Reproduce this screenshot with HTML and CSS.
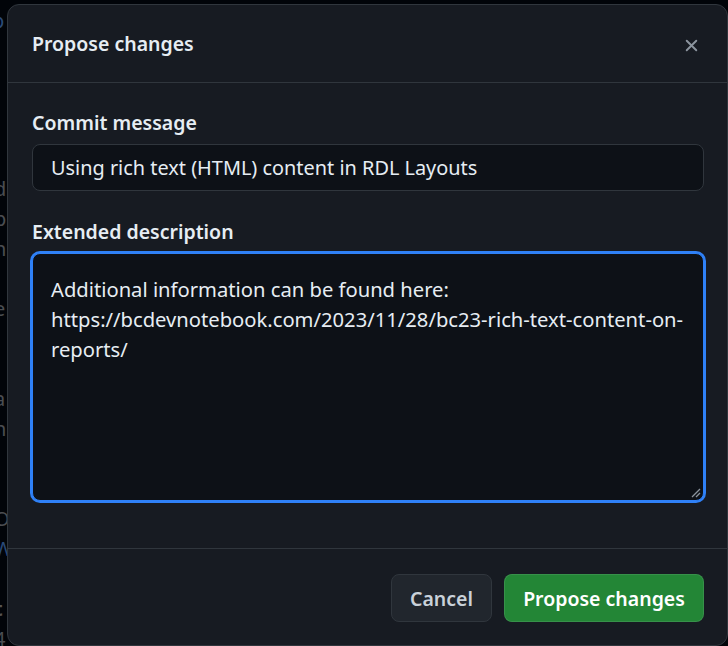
FILE: index.html
```html
<!DOCTYPE html>
<html lang="en">
<head>
<meta charset="utf-8">
<title>Propose changes</title>
<link rel="stylesheet" href="styles.css">
</head>
<body>
<div class="backdrop">
  <div class="bg-line blue top">p</div>
  <div class="bg-line l1">d</div>
  <div class="bg-line">p</div>
  <div class="bg-line">n</div>
  <div class="bg-line gap">e</div>
  <div class="bg-line gap2">a</div>
  <div class="bg-line">n</div>
  <div class="bg-line">i</div>
  <div class="bg-line gap">O</div>
  <div class="bg-line blue">W</div>
  <div class="bg-line">i</div>
  <div class="bg-line bold">t</div>
  <div class="bg-line">4</div>
</div>
<div class="dialog" role="dialog" aria-labelledby="dlg-title">
  <div class="dialog-header">
    <h1 id="dlg-title" class="dialog-title">Propose changes</h1>
    <button class="close-btn" aria-label="Close">
      <svg width="16" height="16" viewBox="0 0 16 16" aria-hidden="true"><path d="M3.5 3.5l9 9M12.5 3.5l-9 9" stroke="currentColor" stroke-width="1.8" stroke-linecap="round" fill="none"/></svg>
    </button>
  </div>
  <div class="dialog-body">
    <label class="field-label" for="msg">Commit message</label>
    <input id="msg" class="text-input" type="text" value="Using rich text (HTML) content in RDL Layouts">
    <label class="field-label second" for="desc">Extended description</label>
    <div class="textarea-wrap">
      <div id="desc" class="textarea">Additional information can be found here:<br>https://bcdevnotebook.com/2023/11/28/bc23-rich-text-content-on-<br>reports/</div>
      <svg class="resize" width="10" height="10" viewBox="0 0 10 10" aria-hidden="true"><path d="M1 9L9 1M5 9L9 5" stroke="#8b949e" stroke-width="1.3" fill="none"/></svg>
    </div>
  </div>
  <div class="dialog-footer">
    <button class="btn btn-default">Cancel</button>
    <button class="btn btn-primary">Propose changes</button>
  </div>
</div>
</body>
</html>
```
FILE: styles.css
```css
* { box-sizing: border-box; }
html, body { margin: 0; padding: 0; }
body {
  width: 728px;
  height: 646px;
  overflow: hidden;
  background: #010409;
  font-family: "Noto Sans", "Open Sans", sans-serif;
  color: #e6edf3;
  position: relative;
}
.backdrop {
  padding-top: 6px;
  font-size: 20px;
  line-height: 30px;
  color: #4a4d52;
}
.bg-line { margin-left: -6px; }
.bg-line.top { margin-left: -8px; margin-bottom: 138px; }
.bg-line.blue { color: #2a4a78; }
.bg-line.gap { margin-top: 30px; }
.bg-line.gap2 { margin-top: 60px; }
.bg-line.bold { font-weight: 700; color: #555; }

.dialog {
  position: absolute;
  left: 7px;
  top: 4px;
  width: 721px;
  height: 642px;
  background: #171b22;
  border: 1px solid #30363d;
  border-radius: 12px;
  display: flex;
  flex-direction: column;
}
.dialog-header {
  height: 78px;
  border-bottom: 1px solid #30363d;
  display: flex;
  align-items: center;
  justify-content: space-between;
  padding: 0 24px;
}
.dialog-title {
  margin: 0;
  font-size: 19.5px;
  font-weight: 600;
  color: #e6edf3;
}
.close-btn {
  background: none;
  border: 0;
  padding: 0;
  width: 24px;
  height: 24px;
  display: flex;
  align-items: center;
  justify-content: center;
  color: #8b949e;
  margin-right: 0;
  margin-top: 4px;
}
.close-btn svg { width: 17px; height: 17px; }
.dialog-body {
  padding: 26px 23px 0 24px;
  display: flex;
  flex-direction: column;
  flex: 1;
  border-bottom: 1px solid #30363d;
}
.field-label {
  font-size: 19.5px;
  font-weight: 600;
  line-height: 27px;
  margin-bottom: 8px;
  color: #e6edf3;
}
.field-label.second { margin-top: 27px; margin-bottom: 8px; }
.text-input {
  height: 47px;
  width: 100%;
  background: #0d1117;
  border: 1px solid #30363d;
  border-radius: 8px;
  padding: 0 18px;
  color: #e6edf3;
  font: inherit;
  font-size: 19.9px;
  outline: none;
}
.textarea-wrap {
  position: relative;
  height: 248px;
}
.textarea {
  height: 100%;
  background: #0d1117;
  border: 1px solid #2f81f7;
  box-shadow: 0 0 0 2px #2f81f7;
  border-radius: 8px;
  padding: 20px 18px;
  font-size: 20.2px;
  line-height: 30px;
  color: #e6edf3;
}
.resize {
  position: absolute;
  right: 3px;
  bottom: 3px;
}
.dialog-footer {
  height: 96px;
  display: flex;
  justify-content: flex-end;
  align-items: flex-start;
  gap: 12px;
  padding: 25px 23px 0 0;
}
.btn {
  height: 48px;
  border-radius: 8px;
  font-family: inherit;
  font-size: 19.5px;
  font-weight: 600;
  padding: 0 12px;
  border: 1px solid rgba(240,246,252,0.1);
}
.btn-default {
  width: 101px;
  background: #21262d;
  color: #c9d1d9;
  border-color: #30363d;
}
.btn-primary {
  width: 200px;
  background: #238636;
  color: #ffffff;
}
```
